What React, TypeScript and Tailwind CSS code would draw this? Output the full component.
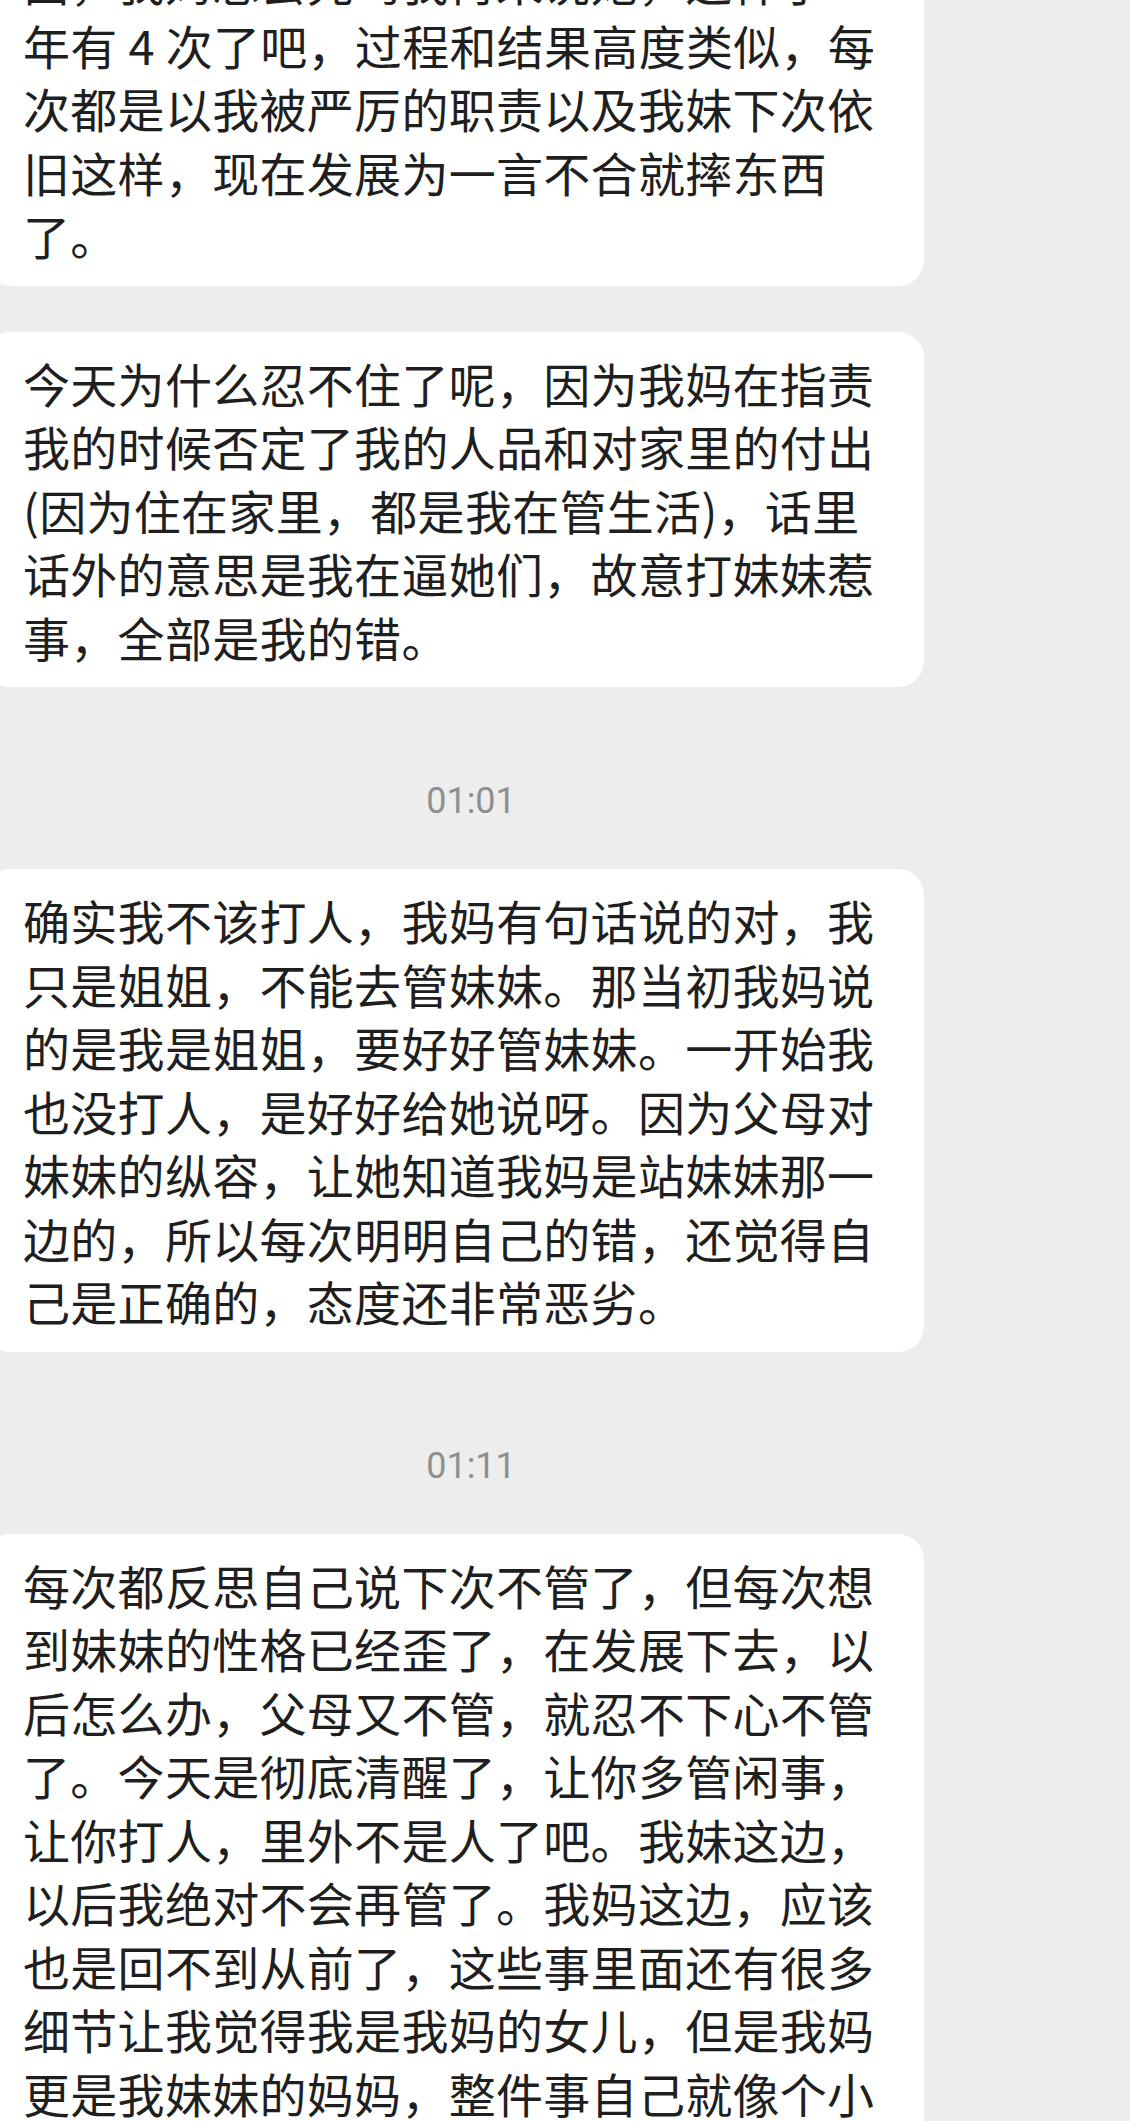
import React from "react";

const b1 = [
  "面，我妈总会先骂我再来说她，这样子一",
  "年有 4 次了吧，过程和结果高度类似，每",
  "次都是以我被严厉的职责以及我妹下次依",
  "旧这样，现在发展为一言不合就摔东西",
  "了。",
];
const b2 = [
  "今天为什么忍不住了呢，因为我妈在指责",
  "我的时候否定了我的人品和对家里的付出",
  "(因为住在家里，都是我在管生活)，话里",
  "话外的意思是我在逼她们，故意打妹妹惹",
  "事，全部是我的错。",
];
const b3 = [
  "确实我不该打人，我妈有句话说的对，我",
  "只是姐姐，不能去管妹妹。那当初我妈说",
  "的是我是姐姐，要好好管妹妹。一开始我",
  "也没打人，是好好给她说呀。因为父母对",
  "妹妹的纵容，让她知道我妈是站妹妹那一",
  "边的，所以每次明明自己的错，还觉得自",
  "己是正确的，态度还非常恶劣。",
];
const b4 = [
  "每次都反思自己说下次不管了，但每次想",
  "到妹妹的性格已经歪了，在发展下去，以",
  "后怎么办，父母又不管，就忍不下心不管",
  "了。今天是彻底清醒了，让你多管闲事，",
  "让你打人，里外不是人了吧。我妹这边，",
  "以后我绝对不会再管了。我妈这边，应该",
  "也是回不到从前了，这些事里面还有很多",
  "细节让我觉得我是我妈的女儿，但是我妈",
  "更是我妹妹的妈妈，整件事自己就像个小",
];

function Bubble({ lines }: { lines: string[] }) {
  return (
    <div className="ml-[-16px] w-[940px] shrink-0 rounded-[26px] bg-white pl-[39px] pr-[20px] py-[19px] font-['Noto_Sans_CJK_SC','Noto_Sans_CJK_JP',sans-serif] text-[47px] leading-[63.5px] tracking-[0.3px] text-[#1f1f1f]">
      {lines.map((l, i) => (
        <div key={i} className="whitespace-pre">
          {l}
        </div>
      ))}
    </div>
  );
}

function Stamp({ t }: { t: string }) {
  return (
    <div className="flex w-[942px] justify-center pt-[93px] pb-[47px]">
      <span className="font-['Roboto',sans-serif] text-[36px] leading-[42px] text-[#8f8f8f]">{t}</span>
    </div>
  );
}

export default function App() {
  return (
    <div className="h-[2121px] w-[1130px] overflow-hidden bg-[#ededed]">
      <div className="mt-[-70px] flex flex-col">
        <Bubble lines={b1} />
        <div className="h-[46px] shrink-0" />
        <Bubble lines={b2} />
        <Stamp t="01:01" />
        <Bubble lines={b3} />
        <Stamp t="01:11" />
        <div className="min-h-[700px] ml-[-16px] w-[940px] shrink-0 rounded-[26px] bg-white pl-[39px] pr-[20px] py-[19px] font-['Noto_Sans_CJK_SC','Noto_Sans_CJK_JP',sans-serif] text-[47px] leading-[63.5px] tracking-[0.3px] text-[#1f1f1f]">
          {b4.map((l, i) => (
            <div key={i} className="whitespace-pre">
              {l}
            </div>
          ))}
        </div>
      </div>
    </div>
  );
}
